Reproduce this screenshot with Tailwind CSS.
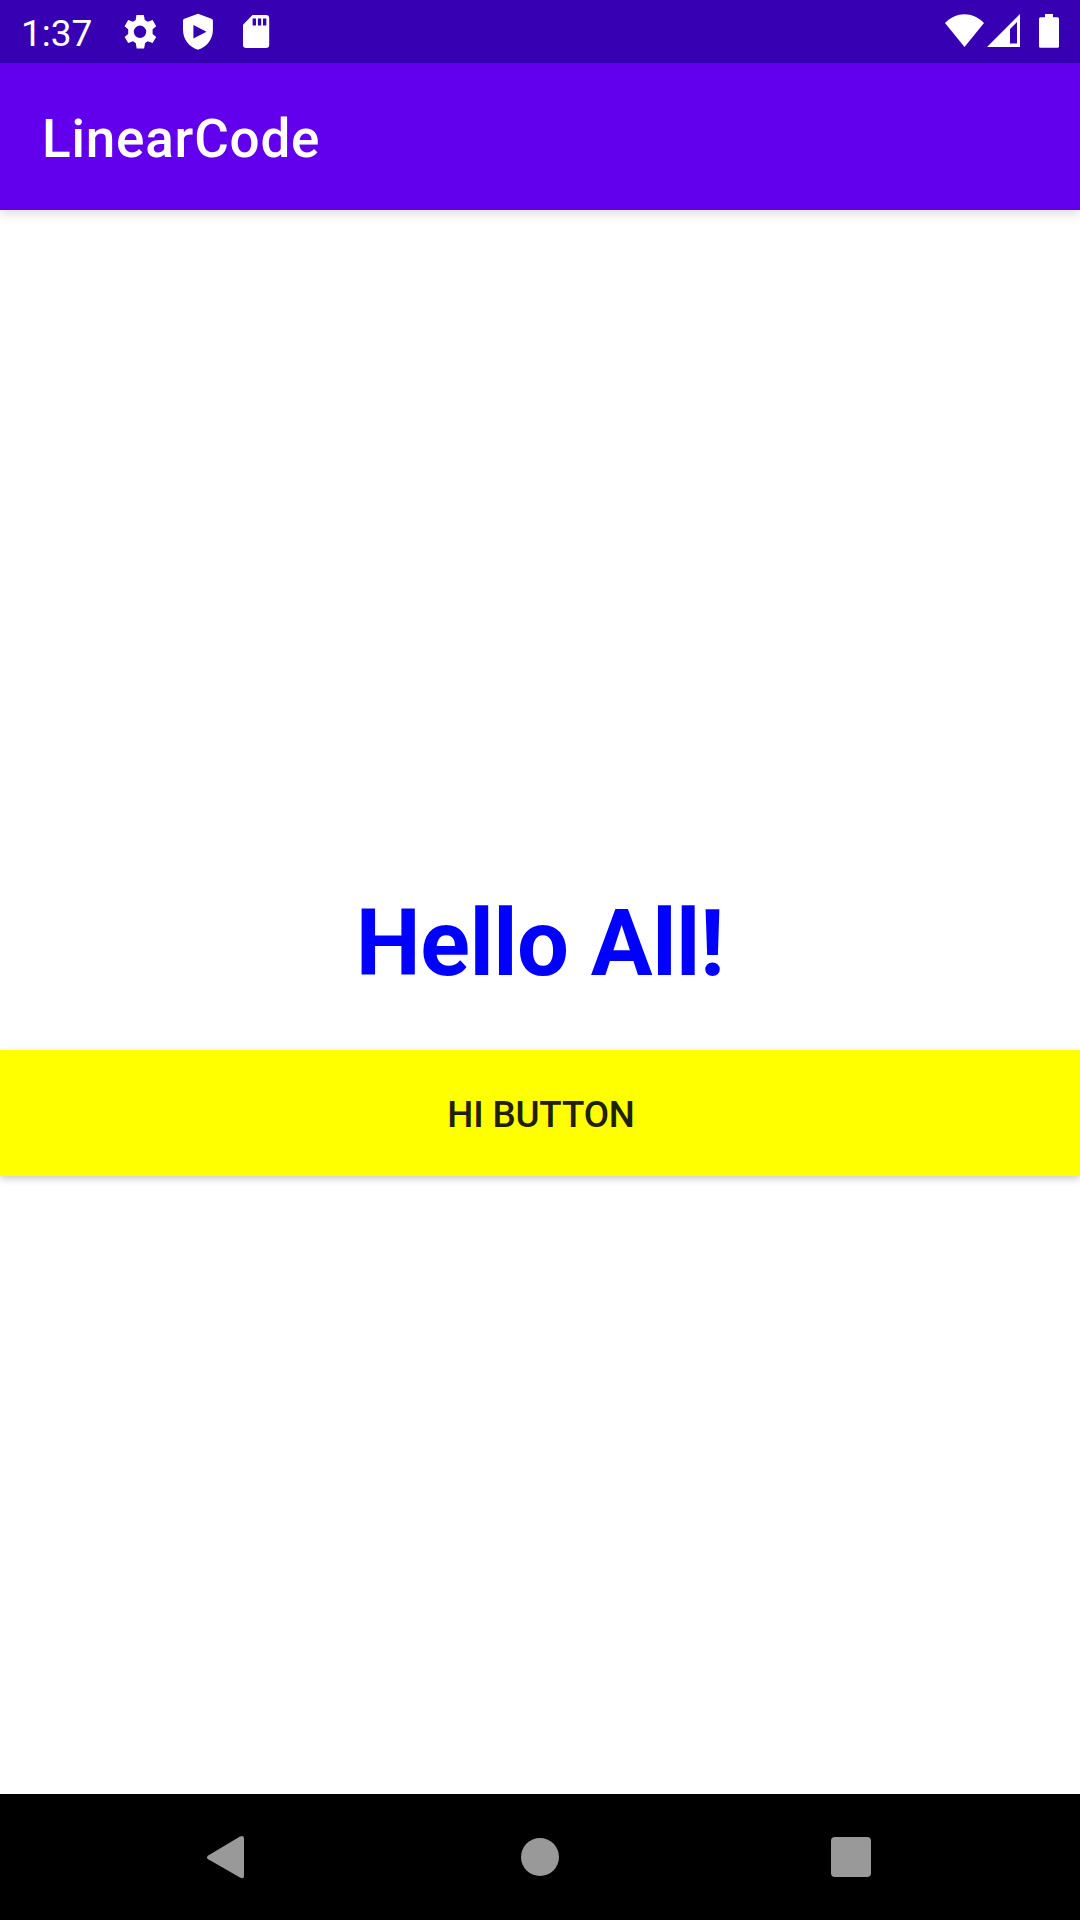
<!DOCTYPE html>
<html lang="en">
<head>
<meta charset="utf-8">
<title>LinearCode</title>
<script src="https://cdn.jsdelivr.net/npm/@tailwindcss/browser@4"></script>
</head>
<body class="w-[1080px] h-[1920px] overflow-hidden flex flex-col bg-white font-['Roboto',sans-serif]">
<div class="h-[63px] shrink-0 bg-[#3700b3] flex items-center text-white pl-[21px] pr-[17px]">
  <span class="text-[37px] leading-none w-[98px] pt-[3px]">1:37</span>
  <div class="flex gap-4">
    <svg class="w-[42px] h-[63px]" viewBox="0 0 42 63" fill="currentColor"><path fill-rule="evenodd" d="M17.4 15h7.400l1 5.100 3 1.700 4.800-1.800 3.600 6.300-3.600 3v4.800l3.600 3-3.600 6-4.800-1.800-2.700 1.600-1 5.500h-7.400l-1-5.500-2.700-1.600-4.800 1.800-3.600-6 3.600-3v-4.800l-3.600-3 3.600-6.300 4.800 1.800 2.700-1.700zM21 25.600a6.200 6.200 0 1 0 0 12.400 6.200 6.200 0 0 0 0-12.400z"/></svg>
    <svg class="w-[42px] h-[63px]" viewBox="0 0 42 63" fill="currentColor"><path fill-rule="evenodd" d="M21 13.800l13.500 5q1.400.6 1.400 2v9c0 9.500-6 17.200-14.900 20C12.100 47 6 39.300 6 29.800v-9q0-1.400 1.400-2zM16.400 25v13.400L29.500 31.700z"/></svg>
    <svg class="w-[42px] h-[63px]" viewBox="0 0 42 63" fill="currentColor"><path fill-rule="evenodd" d="M17.500 15H31q3.200 0 3.200 3.200v26.500q0 3.200-3.200 3.200H11.200Q8 47.900 8 44.700V24.800zM17.600 18.500v7h3.400v-7zM22.900 18.500v7h3.300v-7zM28 18.500v7h3.300v-7z"/></svg>
  </div>
  <svg class="w-[123px] h-[63px] ml-auto" viewBox="0 0 123 63" fill="currentColor">
    <path d="M5 23C16 11.300 33 11.300 44 23L24.500 47z"/>
    <path fill-rule="evenodd" d="M80 14v33H47zM77 22l-7 7v14.500h7z"/>
    <path d="M105 14h8v3.300h4.500q1.500 0 1.500 1.500v27.400q0 1.600-1.500 1.600h-17q-1.500 0-1.500-1.600V18.800q0-1.500 1.500-1.500h4.500z"/>
  </svg>
</div>
<header class="h-[147px] shrink-0 bg-[#6200ee] flex items-center pt-[6px] pl-[42px] text-white shadow-[0_4px_10px_rgba(0,0,0,0.13)]">
  <h1 class="text-[53px] leading-none font-medium tracking-[0.8px]">LinearCode</h1>
</header>
<main class="flex-1 flex flex-col pt-[665px]">
  <h2 class="h-[138px] leading-[138px] text-center text-[92px] font-bold tracking-[-0.5px] text-[#0000ff]">Hello All!</h2>
  <button class="mt-[37px] pt-[4px] pl-[2px] h-[126px] bg-[#ffff00] text-[36.75px] leading-none font-medium tracking-[-0.15px] text-[#212100] shadow-[0_3px_7px_rgba(0,0,0,0.2)]">HI BUTTON</button>
</main>
<nav class="h-[126px] shrink-0 bg-black text-[#999] flex items-center justify-between pl-[204px] pr-[209px]">
  <svg class="w-[44px] h-[44px]" viewBox="0 0 44 44" fill="currentColor"><path d="M4.200 20.500L36 1.600q4-2 4 2v37q0 4-4 2L4.200 24.300q-2.400-1.900 0-3.800z"/></svg>
  <div class="w-[38px] h-[38px] rounded-full bg-[#999]"></div>
  <div class="w-[40px] h-[40px] rounded-[4px] bg-[#999]"></div>
</nav>
</body>
</html>
